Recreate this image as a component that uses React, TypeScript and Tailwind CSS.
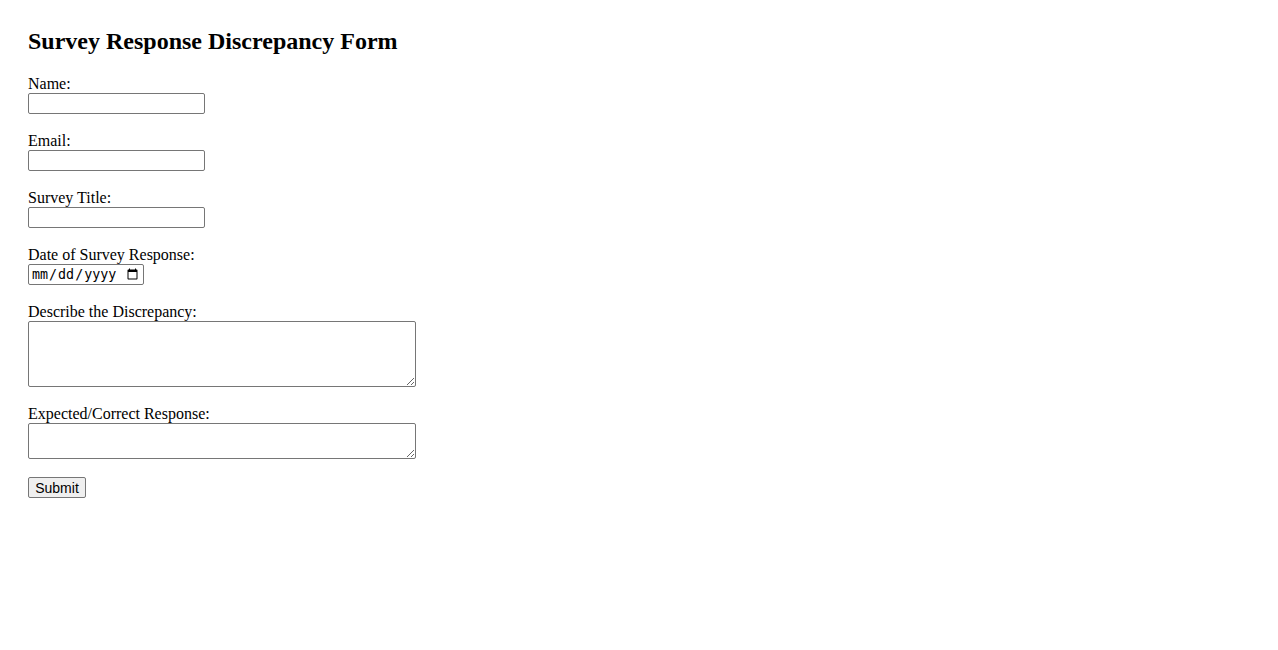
import { useState } from 'react';

type Field = {
  id: string;
  label: string;
  kind: 'text' | 'email' | 'date' | 'textarea';
  rows?: 'tall' | 'short';
};

const fields: Field[] = [
  { id: 'name', label: 'Name:', kind: 'text' },
  { id: 'email', label: 'Email:', kind: 'email' },
  { id: 'surveyTitle', label: 'Survey Title:', kind: 'text' },
  { id: 'surveyDate', label: 'Date of Survey Response:', kind: 'date' },
  { id: 'discrepancy', label: 'Describe the Discrepancy:', kind: 'textarea', rows: 'tall' },
  { id: 'expected', label: 'Expected/Correct Response:', kind: 'textarea', rows: 'short' },
];

const boxBase =
  'block border border-[#767676] rounded-[2px] bg-white text-black outline-none';

export default function App() {
  const [values, setValues] = useState<Record<string, string>>({});

  const update = (id: string, value: string) =>
    setValues((prev) => ({ ...prev, [id]: value }));

  return (
    <div className="min-h-screen bg-white text-black font-['Liberation_Serif','Times_New_Roman',serif] text-[16px]">
      <form
        className="pt-[28px] pl-[28px]"
        onSubmit={(e) => e.preventDefault()}
      >
        <h2 className="text-[24px] font-bold leading-[27px] mb-[18px]">
          Survey Response Discrepancy Form
        </h2>

        {fields.map((field) => (
          <div key={field.id} className="mb-[16px]">
            <label htmlFor={field.id} className="block pt-[2px] leading-[18px]">
              {field.label}
            </label>
            {field.kind === 'textarea' ? (
              <textarea
                id={field.id}
                value={values[field.id] ?? ''}
                onChange={(e) => update(field.id, e.target.value)}
                className={`${boxBase} w-[388px] p-[2px] font-['DejaVu_Sans_Mono',monospace] text-[13.33px] ${
                  field.rows === 'tall' ? 'h-[66px]' : 'h-[36px]'
                }`}
              />
            ) : field.kind === 'date' ? (
              <input
                id={field.id}
                type="date"
                value={values[field.id] ?? ''}
                onChange={(e) => update(field.id, e.target.value)}
                className={`${boxBase} w-[116px] h-[21px] px-[2px] py-[1px] font-['DejaVu_Sans_Mono',monospace] text-[13.33px]`}
              />
            ) : (
              <input
                id={field.id}
                type={field.kind}
                value={values[field.id] ?? ''}
                onChange={(e) => update(field.id, e.target.value)}
                className={`${boxBase} w-[177px] h-[21px] px-[2px] py-[1px] font-['Liberation_Sans',Arial,sans-serif] text-[13.33px]`}
              />
            )}
          </div>
        ))}

        <button
          type="submit"
          className="mt-[2px] w-[58px] h-[21px] border border-[#767676] rounded-[2px] bg-[#efefef] text-black font-['Liberation_Sans',Arial,sans-serif] text-[14px] leading-none"
        >
          Submit
        </button>
      </form>
    </div>
  );
}
